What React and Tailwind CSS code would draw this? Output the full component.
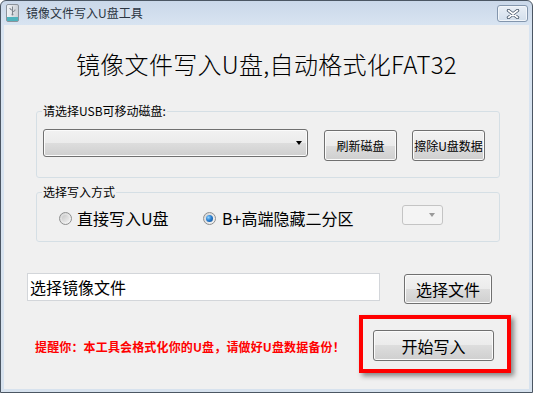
import React from "react";

const FONT = { fontFamily: '"Noto Sans CJK SC", "Noto Sans", sans-serif' };

function UsbIcon() {
  return (
    <svg width="13" height="18" viewBox="0 0 13 18">
      <defs>
        <linearGradient id="ub" x1="0" x2="1" y1="0" y2="0">
          <stop offset="0" stopColor="#f4f6f8" />
          <stop offset="1" stopColor="#c9ced4" />
        </linearGradient>
      </defs>
      <rect x="0.5" y="0.5" width="12" height="17" rx="1.5" fill="url(#ub)" stroke="#8c939b" />
      <rect x="1" y="13" width="11" height="4" fill="#4fb3bd" />
      <path d="M6.5 2.5 V10 M6.5 6.5 L4 5 V4 M6.5 8 L9 6.5 V5.5" stroke="#7d848c" strokeWidth="1" fill="none" />
      <circle cx="6.5" cy="10.5" r="1" fill="#7d848c" />
    </svg>
  );
}

function CloseButton() {
  return (
    <div className="ml-auto self-start mt-[4px] w-[31px] h-[17px] rounded-[3px] border border-[#8396ad] bg-[linear-gradient(#e9eff6,#d3dfec)] shadow-[inset_0_0_0_1px_#f2f6fa] flex items-center justify-center">
      <svg width="14" height="10" viewBox="0 0 14 10">
        <path d="M2.5 1.5 L11.5 8.5 M11.5 1.5 L2.5 8.5" stroke="#4a5a6c" strokeWidth="3.4" strokeLinecap="round" />
        <path d="M2.5 1.5 L11.5 8.5 M11.5 1.5 L2.5 8.5" stroke="#ffffff" strokeWidth="1.6" strokeLinecap="round" />
      </svg>
    </div>
  );
}

function Btn({ children, className = "" }) {
  return (
    <div
      className={
        "flex items-center justify-center rounded-[3px] border border-[#707070] bg-[linear-gradient(#f2f2f2_0%,#ebebeb_50%,#dddddd_50%,#cfcfcf_100%)] shadow-[inset_0_0_0_1px_#fbfbfb] text-black " +
        className
      }
    >
      {children}
    </div>
  );
}

function Radio({ checked }) {
  return (
    <div className="w-[13px] h-[13px] rounded-full border border-[#8e8f8f] bg-[linear-gradient(135deg,#d4d4d4,#f7f7f7)] flex items-center justify-center shrink-0">
      {checked ? (
        <div className="w-[7px] h-[7px] rounded-full bg-[radial-gradient(circle_at_35%_35%,#8fd3ff_0%,#2b7fd0_45%,#0f4a8c_100%)]" />
      ) : (
        <div className="w-[7px] h-[7px] rounded-full bg-[linear-gradient(135deg,#c9c9c9,#eeeeee)]" />
      )}
    </div>
  );
}

export default function App() {
  return (
    <div
      className="w-[533px] h-[393px] flex flex-col border border-[#4b5663] rounded-t-[6px] bg-[linear-gradient(#cad8e9_0px,#d8e4f1_24px,#d7e2ee_100%)] overflow-hidden"
      style={FONT}
    >
      {/* title bar */}
      <div className="h-[24px] flex items-center pl-[5px] pr-[4px] shrink-0">
        <UsbIcon />
        <span className="ml-[7px] text-[12px] leading-[14px] text-[#2a3440]">镜像文件写入U盘工具</span>
        <CloseButton />
      </div>

      {/* client */}
      <div className="flex-1 mx-[3px] mb-[3px] bg-[#f0f0f0] flex flex-col">
        <div className="pt-[23px] text-center text-[24px] leading-[32px] font-light tracking-[0.3px] text-black">
          镜像文件写入U盘,自动格式化FAT32
        </div>

        <fieldset className="mt-[24px] ml-[32px] w-[464px] border border-[#d5dfe5] rounded-[3px] pl-[6px] pt-[11px] pb-[16px]">
          <legend className="text-[12px] leading-[14px] text-black px-[1px] -ml-[1px]">请选择USB可移动磁盘:</legend>
          <div className="flex items-start">
            <div className="relative w-[265px] h-[28px] rounded-[3px] border border-[#707070] bg-[linear-gradient(#f2f2f2_0%,#ebebeb_50%,#dddddd_50%,#cfcfcf_100%)] shadow-[inset_0_0_0_1px_#fbfbfb] flex items-center justify-end pr-[5px]">
              <div className="w-0 h-0 border-l-[3px] border-r-[3px] border-t-[4px] border-l-transparent border-r-transparent border-t-black" />
            </div>
            <Btn className="ml-[16px] mt-[1px] w-[73px] h-[31px] text-[12px]">刷新磁盘</Btn>
            <Btn className="ml-[15px] mt-[1px] w-[73px] h-[31px] text-[12px]">擦除U盘数据</Btn>
          </div>
        </fieldset>

        <fieldset className="mt-[7px] ml-[32px] w-[464px] border border-[#d5dfe5] rounded-[3px] pl-[6px] pt-[6px] pb-[13px]">
          <legend className="text-[12px] leading-[14px] text-black px-[1px] -ml-[1px]">选择写入方式</legend>
          <div className="flex items-start ml-[16px]">
            <div className="w-[144px] mt-[3px] flex items-center text-[16px] leading-[20px] text-black">
              <Radio checked={false} />
              <span className="ml-[5px]">直接写入U盘</span>
            </div>
            <div className="w-[199px] mt-[3px] flex items-center text-[16px] leading-[20px] text-black">
              <Radio checked />
              <span className="ml-[6px]">B+高端隐藏二分区</span>
            </div>
            <div className="w-[41px] h-[20px] rounded-[3px] border border-[#c4c4c4] bg-[#f4f4f4] flex items-center justify-end pr-[7px]">
              <div className="w-0 h-0 border-l-[3px] border-r-[3px] border-t-[4px] border-l-transparent border-r-transparent border-t-[#9a9a9a]" />
            </div>
          </div>
        </fieldset>

        <div className="mt-[31px] ml-[23px] flex items-start">
          <div className="w-[353px] h-[28px] bg-white border border-[#d3d6da] flex items-center pl-[2px] text-[16px] leading-[20px] text-black">
            选择镜像文件
          </div>
          <Btn className="ml-[24px] mt-[1px] w-[88px] h-[30px] text-[16px]">选择文件</Btn>
        </div>

        <div className="mt-[11px] flex items-start">
          <div className="ml-[31px] mt-[25px] text-[12px] leading-[14px] font-bold tracking-[0.15px] text-[#ff0000] whitespace-nowrap">
            提醒你：本工具会格式化你的U盘，请做好U盘数据备份！
          </div>
          <div className="ml-auto mr-[18px] w-[152px] h-[58px] border-4 border-[#ff0000] shadow-[3px_3px_5px_rgba(0,0,0,0.45)] pl-[10px] pt-[11px]">
            <Btn className="w-[121px] h-[31px] text-[16px]">开始写入</Btn>
          </div>
        </div>
      </div>
    </div>
  );
}
